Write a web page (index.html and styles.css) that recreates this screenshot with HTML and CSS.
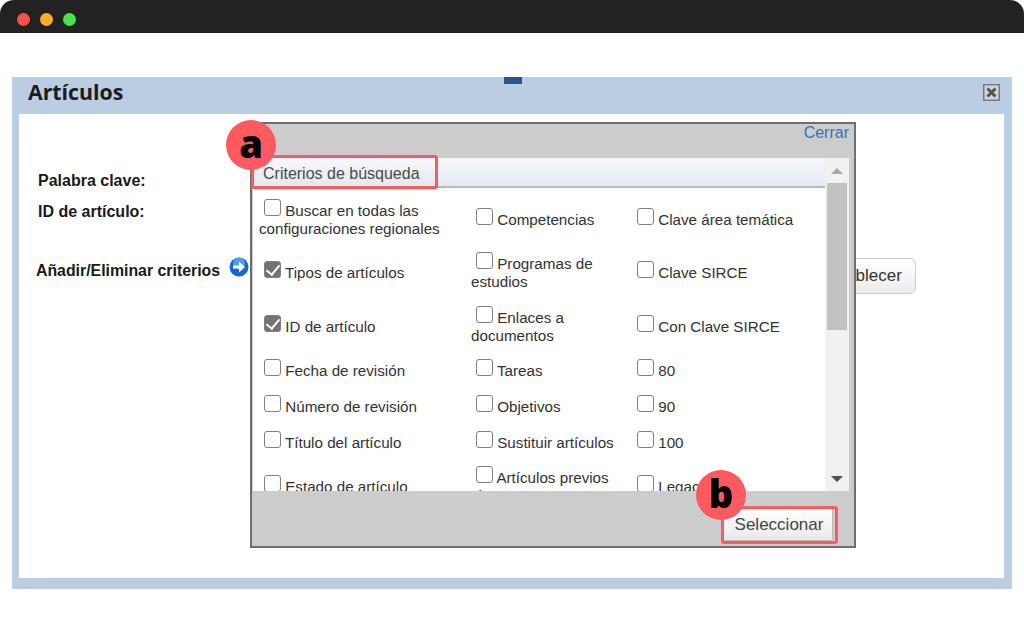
FILE: index.html
```html
<!DOCTYPE html>
<html lang="es">
<head>
  <meta charset="UTF-8" />
  <title>Artículos</title>
  <link rel="stylesheet" href="styles.css">
</head>
<body>
  <div class="browser-bar">
    <span class="dot dot-red"></span>
    <span class="dot dot-yellow"></span>
    <span class="dot dot-green"></span>
  </div>

  <div class="window">
    <span class="handle"></span>
    <div class="window-title">
      <h1>Artículos</h1>
      <button type="button" class="close-btn" aria-label="Cerrar">
        <svg width="17" height="17" viewBox="0 0 17 17">
          <rect x="0.75" y="0.75" width="15.5" height="15.5" fill="#ced6e0" stroke="#7a7a7a" stroke-width="1.5"/>
          <path d="M4.5 4.5 L12.5 12.5 M12.5 4.5 L4.5 12.5" stroke="#555" stroke-width="3" fill="none"/>
        </svg>
      </button>
    </div>

    <div class="window-body">
      <div class="field-row field-first">Palabra clave:</div>
      <div class="field-row field-second">ID de artículo:</div>
      <div class="criteria-row">
        <span class="criteria-label">Añadir/Eliminar criterios</span>
        <svg class="arrow-icon" width="20" height="20" viewBox="0 0 20 20">
          <circle cx="10" cy="10" r="9.5" fill="#1668c8"/>
          <circle cx="10" cy="6.5" r="6" fill="#4f9be8"/>
          <path d="M4 8.4 H10 V4.5 L16 10 L10 15.5 V11.6 H4 Z" fill="#fff"/>
        </svg>
        <button type="button" class="reset-btn">Restablecer</button>
      </div>

      <div class="modal">
        <div class="modal-top"><a href="#" class="modal-close">Cerrar</a></div>
        <div class="modal-panel">
          <div class="panel-main">
            <div class="panel-header">Criterios de búsqueda</div>
            <div class="options">
              <label class="opt"><input type="checkbox"> Buscar en todas las configuraciones regionales</label>
              <label class="opt"><input type="checkbox"> Competencias</label>
              <label class="opt"><input type="checkbox"> Clave área temática</label>

              <label class="opt"><input type="checkbox" checked> Tipos de artículos</label>
              <label class="opt"><input type="checkbox"> Programas de estudios</label>
              <label class="opt"><input type="checkbox"> Clave SIRCE</label>

              <label class="opt"><input type="checkbox" checked> ID de artículo</label>
              <label class="opt"><input type="checkbox"> Enlaces a documentos</label>
              <label class="opt"><input type="checkbox"> Con Clave SIRCE</label>

              <label class="opt"><input type="checkbox"> Fecha de revisión</label>
              <label class="opt"><input type="checkbox"> Tareas</label>
              <label class="opt"><input type="checkbox"> 80</label>

              <label class="opt"><input type="checkbox"> Número de revisión</label>
              <label class="opt"><input type="checkbox"> Objetivos</label>
              <label class="opt"><input type="checkbox"> 90</label>

              <label class="opt"><input type="checkbox"> Título del artículo</label>
              <label class="opt"><input type="checkbox"> Sustituir artículos</label>
              <label class="opt"><input type="checkbox"> 100</label>

              <label class="opt"><input type="checkbox"> Estado de artículo</label>
              <label class="opt"><input type="checkbox"> Artículos previos vistos</label>
              <label class="opt"><input type="checkbox"> Legacy ID</label>
            </div>
          </div>
          <div class="scrollbar">
            <span class="scroll-up"></span>
            <span class="scroll-thumb"></span>
            <span class="scroll-down"></span>
          </div>
        </div>
        <div class="modal-bottom">
          <button type="button" class="select-btn">Seleccionar</button>
        </div>
      </div>

      <span class="mark mark-a">a</span>
      <span class="mark mark-b">b</span>
      <span class="outline outline-a"></span>
      <span class="outline outline-b"></span>
    </div>
  </div>
</body>
</html>
```

FILE: styles.css
```css
* {
  box-sizing: border-box;
}
html, body {
  height: 100%;
}
body {
  margin: 0;
  background: #fff;
  font-family: "Liberation Sans", Arial, sans-serif;
  overflow: hidden;
}

.browser-bar {
  height: 33px;
  background: #222;
  border-radius: 14px 14px 0 0;
  display: flex;
  align-items: center;
  gap: 10px;
  padding: 5px 0 0 17px;
}
.dot {
  width: 13px;
  height: 13px;
  border-radius: 50%;
}
.dot-red { background: #f9504b; }
.dot-yellow { background: #fbb02d; }
.dot-green { background: #4be04f; }

.window {
  position: relative;
  margin: 44px 12px 0;
  height: 512px;
  background: #bacde3;
  padding: 0 8px 11px 7px;
  display: flex;
  flex-direction: column;
}
.handle {
  position: absolute;
  left: 492px;
  top: 0;
  width: 18px;
  height: 7px;
  background: #2b5587;
}
.window-title {
  height: 37px;
  flex: none;
  display: flex;
  align-items: center;
  justify-content: space-between;
  padding: 0 4px 9px 9px;
}
.window-title h1 {
  margin: 0;
  font-family: "Open Sans", sans-serif;
  font-size: 21.3px;
  font-weight: 700;
  color: #1c1c1c;
}
.close-btn {
  border: 0;
  padding: 0;
  margin-top: 2px;
  background: none;
  display: flex;
}

.window-body {
  position: relative;
  flex: 1;
  background: #fff;
  padding: 58px 0 0 19px;
  font-size: 16px;
  font-weight: 700;
  color: #1a1a1a;
}
.field-row {
  height: 32px;
  line-height: 18px;
}
.field-first {
  height: 31px;
}
.criteria-row {
  margin: 23px 88px 0 -2px;
  display: flex;
  align-items: flex-start;
  height: 36px;
}
.criteria-label {
  font-size: 15.85px;
  line-height: 18px;
  margin-top: 4px;
}
.arrow-icon {
  margin: -1px 0 0 9px;
}
.reset-btn {
  margin-left: auto;
  width: 114px;
  height: 36px;
  border: 1px solid #ccc;
  border-radius: 6px;
  background: linear-gradient(#fff, #ececec);
  font-family: inherit;
  font-size: 17px;
  color: #333;
  padding: 0 5px 0 0;
}

.modal {
  position: absolute;
  left: 231px;
  top: 8px;
  width: 606px;
  height: 426px;
  background: #ccc;
  border: 2px solid #6e6e6e;
  display: flex;
  flex-direction: column;
  font-weight: 400;
  color: #333;
}
.modal-top {
  height: 34px;
  flex: none;
  text-align: right;
  padding: 0 5px 0 0;
  line-height: 18px;
}
.modal-close {
  font-size: 16px;
  color: #3f6fb5;
  text-decoration: none;
}
.modal-panel {
  height: 333px;
  flex: none;
  margin: 0 5px 0 1px;
  display: flex;
  background: #fff;
}
.panel-main {
  flex: 1;
  overflow: hidden;
}
.panel-header {
  height: 30px;
  padding: 1px 0 0 10px;
  line-height: 30px;
  font-size: 16px;
  color: #4a4a4a;
  background: linear-gradient(#f7f8fb, #e3e8f1);
  border-bottom: 2px solid #b5b9bf;
}
.options {
  display: grid;
  grid-template-columns: 212px 161px 1fr;
  grid-template-rows: 52px 54px 54px 35px 36px 36px 52px;
  padding: 5px 0 0 6px;
  align-items: center;
}
.opt {
  font-size: 15.2px;
  line-height: 18px;
  margin-top: -2px;
}
.opt input {
  appearance: none;
  position: relative;
  width: 17px;
  height: 17px;
  margin: 0 0 0 5px;
  vertical-align: 0;
  background: #fff;
  border: 1.5px solid #808080;
  border-radius: 3px;
}
.opt input:checked {
  background: #737373;
}
.opt input:checked::after {
  content: "";
  position: absolute;
  left: 4px;
  top: 0;
  width: 6px;
  height: 11px;
  border: solid #fff;
  border-width: 0 2.5px 2.5px 0;
  transform: rotate(40deg);
}

.scrollbar {
  width: 24px;
  flex: none;
  background: #f1f1f1;
  position: relative;
}
.scroll-thumb {
  position: absolute;
  left: 2px;
  right: 2px;
  top: 25px;
  height: 147px;
  background: #c1c1c1;
}
.scroll-up,
.scroll-down {
  position: absolute;
  left: 6px;
  width: 0;
  height: 0;
  border-left: 6px solid transparent;
  border-right: 6px solid transparent;
}
.scroll-up {
  top: 10px;
  border-bottom: 6px solid #a8a8a8;
}
.scroll-down {
  bottom: 9px;
  border-top: 6px solid #505050;
}

.modal-bottom {
  flex: 1;
  display: flex;
  justify-content: flex-end;
  align-items: flex-start;
  padding: 17px 21px 0 0;
}
.select-btn {
  width: 112px;
  height: 33px;
  border: 1px solid #bbb;
  border-radius: 2px;
  background: linear-gradient(#fff, #e9e9e9);
  font-family: inherit;
  font-size: 17px;
  color: #444;
  padding: 0 0 0 4px;
}

/* annotations on top of the screenshot */
.mark {
  position: absolute;
  width: 50px;
  height: 50px;
  border-radius: 50%;
  background: #ff5a5f;
  color: #000;
  font-family: "Open Sans", sans-serif;
  font-weight: 800;
  font-size: 38px;
  line-height: 46px;
  text-align: center;
  z-index: 2;
}
.mark-a {
  left: 207px;
  top: 6px;
}
.mark-b {
  left: 677px;
  top: 356px;
}
.outline {
  position: absolute;
  border: 3px solid #ff5a5f;
  border-radius: 3px;
  z-index: 1;
}
.outline-a {
  left: 232px;
  top: 41px;
  width: 187px;
  height: 34px;
}
.outline-b {
  left: 702px;
  top: 392px;
  width: 117px;
  height: 38px;
}
```
